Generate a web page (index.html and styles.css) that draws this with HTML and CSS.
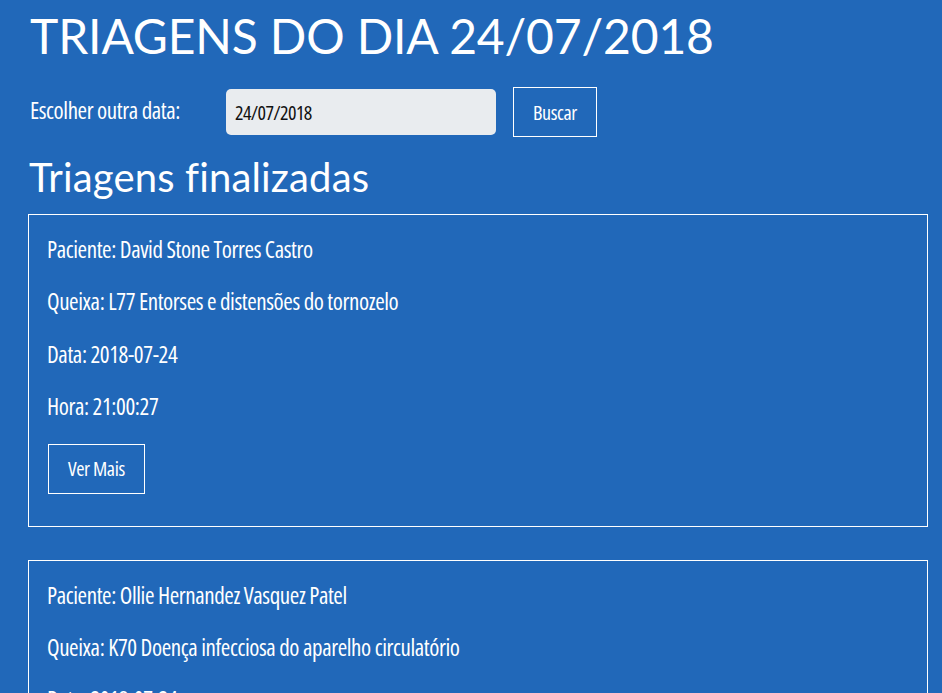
FILE: index.html
```html
<!DOCTYPE html>
<html lang="pt-BR">
<head>
<meta charset="utf-8">
<title>Triagens do dia</title>
<link rel="stylesheet" href="styles.css">
</head>
<body>
<main class="page">
  <h1 class="title">TRIAGENS DO DIA 24/07/2018</h1>
  <form class="date-form">
    <label class="date-label" for="data">Escolher outra data:</label>
    <input class="date-input" id="data" type="text" value="24/07/2018" readonly>
    <button class="btn btn-search" type="button">Buscar</button>
  </form>
  <h2 class="section-title">Triagens finalizadas</h2>
  <section class="list">
    <article class="card">
      <p class="line">Paciente: David Stone Torres Castro</p>
      <p class="line">Queixa: L77 Entorses e distensões do tornozelo</p>
      <p class="line">Data: 2018-07-24</p>
      <p class="line">Hora: 21:00:27</p>
      <button class="btn btn-more" type="button">Ver Mais</button>
    </article>
    <article class="card">
      <p class="line">Paciente: Ollie Hernandez Vasquez Patel</p>
      <p class="line">Queixa: K70 Doença infecciosa do aparelho circulatório</p>
      <p class="line">Data: 2018-07-24</p>
      <p class="line">Hora: 20:41:09</p>
      <button class="btn btn-more" type="button">Ver Mais</button>
    </article>
  </section>
</main>
</body>
</html>
```
FILE: styles.css
```css
html, body {
  margin: 0;
  padding: 0;
  overflow: hidden;
  background: #2168b9;
}

.page {
  padding: 7px 14px 40px 28px;
  color: #fff;
  font-family: "Open Sans", "DejaVu Sans", sans-serif;
  font-stretch: 75%;
  font-weight: 500;
}

.title {
  margin: 0 0 0 2px;
  font-family: Lato, "Open Sans", sans-serif;
  font-stretch: normal;
  font-weight: 400;
  font-size: 48px;
  line-height: 58px;
  letter-spacing: -0.15px;
}

.date-form {
  display: flex;
  align-items: center;
  margin-top: 22px;
  height: 50px;
}

.date-label {
  width: 196px;
  padding-left: 2px;
  margin-bottom: 4px;
  font-size: 23px;
  line-height: 30px;
  letter-spacing: -0.4px;
  white-space: nowrap;
}

.date-input {
  box-sizing: border-box;
  width: 270px;
  height: 46px;
  margin: 0 17px 0 0;
  padding: 0 9px;
  border: none;
  border-radius: 5px;
  background: #e9ecef;
  color: #111;
  font-family: "Open Sans", sans-serif;
  font-stretch: 75%;
  font-weight: 500;
  font-size: 20px;
  letter-spacing: -0.6px;
  outline: none;
}

.btn {
  box-sizing: border-box;
  height: 50px;
  padding: 0 19px;
  border: 1px solid #fff;
  border-radius: 0;
  background: transparent;
  color: #fff;
  font-family: "Open Sans", sans-serif;
  font-stretch: 75%;
  font-weight: 500;
  font-size: 20px;
  letter-spacing: -0.4px;
  cursor: pointer;
}

.btn-more {
  margin-left: 1px;
}

.section-title {
  margin: 16px 0 13px 1px;
  font-family: Lato, "Open Sans", sans-serif;
  font-stretch: normal;
  font-weight: 400;
  font-size: 40px;
  line-height: 48px;
  letter-spacing: 0.15px;
}

.list {
  display: flex;
  flex-direction: column;
  gap: 33px;
}

.card {
  box-sizing: border-box;
  width: 900px;
  padding: 19px 18px 32px;
  border: 1px solid #fff;
}

.line {
  margin: 0 0 21.4px;
  font-size: 23px;
  line-height: 31px;
  letter-spacing: -0.4px;
  white-space: nowrap;
}
```
